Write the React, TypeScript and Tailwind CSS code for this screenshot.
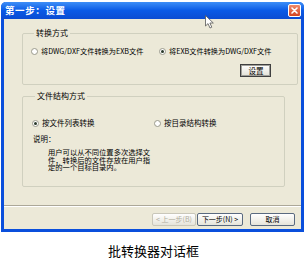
import React from "react";

const font = { fontFamily: '"Noto Sans CJK SC", "Liberation Sans", sans-serif' };

function Radio({ checked }: { checked?: boolean }) {
  return (
    <span className="inline-flex w-[7px] h-[7px] rounded-full border border-[#9a9a8c] bg-white items-center justify-center shrink-0">
      {checked && <span className="w-[3px] h-[3px] rounded-full bg-[#2a3a2a]" />}
    </span>
  );
}

function Btn({ children, w, disabled }: { children: React.ReactNode; w: string; disabled?: boolean }) {
  return (
    <div
      className={`${w} h-[13px] flex items-center justify-center rounded-[2px] border bg-gradient-to-b from-[#ffffff] to-[#e6e4da] text-[7px] leading-none whitespace-nowrap ${
        disabled ? "text-[#b0ad9e] border-[#c9c7ba]" : "text-black border-[#5a6a80]"
      }`}
    >
      {children}
    </div>
  );
}

export default function App() {
  return (
    <div className="w-[307px] h-[260px] bg-white relative overflow-hidden" style={font}>
      <div className="ml-[1px] mt-[2px] w-[303px] flex flex-col border-x-[3px] border-b-[3px] border-[#0a4fdc] rounded-t-[5px] bg-[#ece9d8]">
        {/* title bar */}
        <div className="h-[17px] -mx-[3px] flex items-center justify-between pl-[4px] pr-[3px] rounded-t-[5px] bg-gradient-to-b from-[#3d8ef7] via-[#0a5ae6] to-[#0b4cd2]">
          <span className="text-white font-bold text-[9.5px] leading-none tracking-[0.6px]">第一步：设置</span>
          <div className="w-[13px] h-[13px] rounded-[2px] border border-white bg-gradient-to-b from-[#f08a6a] to-[#d4431e] flex items-center justify-center">
            <svg width="7" height="7" viewBox="0 0 7 7">
              <path d="M1 1 L6 6 M6 1 L1 6" stroke="white" strokeWidth="1.6" strokeLinecap="round" />
            </svg>
          </div>
        </div>

        {/* content */}
        <div className="flex flex-col pl-[18px] pr-[16px] pt-[9px]">
          <fieldset className="border border-[#d0d0bf] rounded-[2px] pl-[8px] pr-[26px] pb-[7px]">
            <legend className="ml-[3px] px-[2px] text-[8px] leading-[10px] text-black">转换方式</legend>
            <div className="flex items-center h-[10px] mt-[9px] text-[7.2px] leading-none text-black whitespace-nowrap">
              <div className="flex items-center gap-[3px] w-[128px] shrink-0">
                <Radio />
                <span>将DWG/DXF文件转换为EXB文件</span>
              </div>
              <div className="flex items-center gap-[3px] shrink-0">
                <Radio checked />
                <span>将EXB文件转换为DWG/DXF文件</span>
              </div>
            </div>
            <div className="flex justify-end mt-[7px]">
              <div className="w-[31px] h-[13px] flex items-center justify-center border border-[#404040] bg-gradient-to-b from-[#ffffff] to-[#e3e1d6] shadow-[inset_0_0_0_1px_#a0a09a] text-[7.5px] leading-none text-black">
                设置
              </div>
            </div>
          </fieldset>

          <fieldset className="mt-[6px] border border-[#d0d0bf] rounded-[2px] pl-[9px] pb-[14px]">
            <legend className="ml-[3px] px-[2px] text-[8px] leading-[10px] text-black">文件结构方式</legend>
            <div className="flex items-center h-[10px] mt-[17px] text-[7.5px] leading-none text-black whitespace-nowrap">
              <div className="flex items-center gap-[3px] w-[122px] shrink-0">
                <Radio checked />
                <span>按文件列表转换</span>
              </div>
              <div className="flex items-center gap-[3px]">
                <Radio />
                <span>按目录结构转换</span>
              </div>
            </div>
            <div className="mt-[6px] h-[10px] flex items-center text-[7.5px] leading-none text-black pl-[1px]">说明：</div>
            <p className="mt-[5px] ml-[16px] w-[104px] text-[7.3px] leading-[7.6px] text-black">
              用户可以从不同位置多次选择文件，转换后的文件存放在用户指定的一个目标目录内。
            </p>
          </fieldset>
        </div>

        <div className="mt-[18px] h-[1px] bg-[#aca899]" />
        <div className="h-[1px] bg-white" />

        <div className="flex justify-end items-center mt-[6px] pr-[6px] pb-[3px]">
          <Btn w="w-[44px]" disabled>&lt; 上一步(B)</Btn>
          <div className="ml-[1px]">
            <Btn w="w-[46px]">下一步(N) &gt;</Btn>
          </div>
          <div className="ml-[7px]">
            <Btn w="w-[45px]">取消</Btn>
          </div>
        </div>
      </div>

      <div className="mt-[10px] text-center text-[13px] leading-[17px] text-black">批转换器对话框</div>

      {/* mouse cursor */}
      <svg className="absolute left-[205px] top-[15px]" width="10" height="14" viewBox="0 0 10 14">
        <path d="M0.5 0.5 L0.5 11 L3 8.6 L5 13 L6.8 12.2 L4.9 8 L8.3 8 Z" fill="white" stroke="#555" strokeWidth="0.8" />
      </svg>
    </div>
  );
}
